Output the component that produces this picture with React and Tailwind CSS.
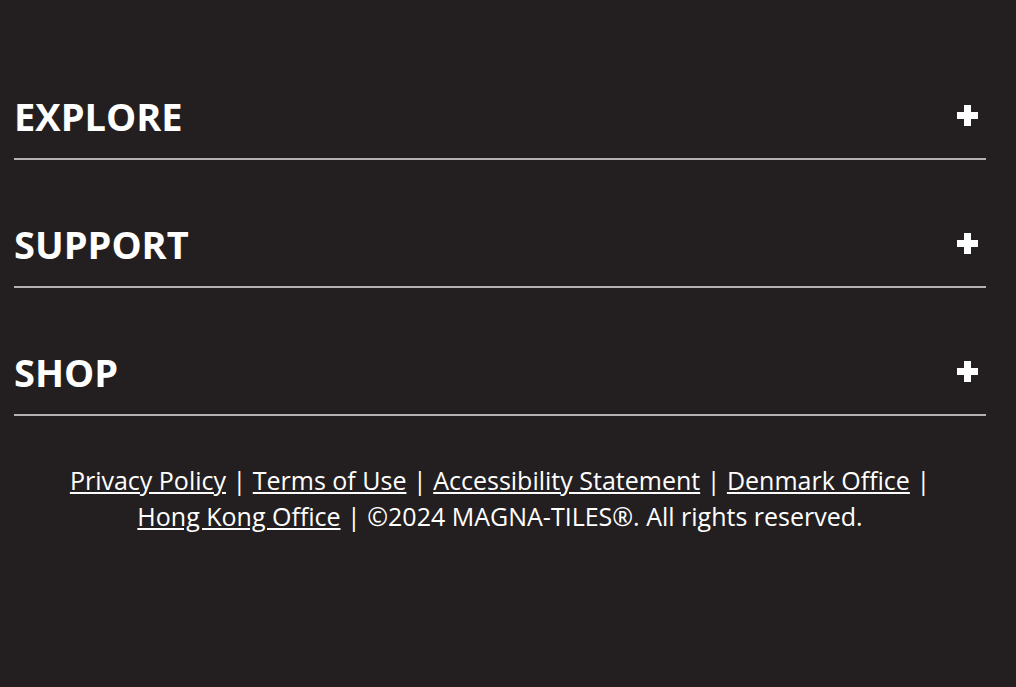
import React from 'react';

const sections = ['EXPLORE', 'SUPPORT', 'SHOP'];

function PlusIcon() {
    return (
        <svg width="21" height="21" viewBox="0 0 21 21" fill="#fff">
            <rect x="7" y="0" width="7" height="21" />
            <rect x="0" y="7" width="21" height="7" />
        </svg>
    );
}

function App() {
    return (
        <div
            className="min-h-[687px] bg-[#231f20] text-white pt-[32px] px-[14px]"
            style={{ fontFamily: '"Open Sans", "Liberation Sans", sans-serif' }}
        >
            <div className="w-[972px]">
                {sections.map((s) => (
                    <div
                        key={s}
                        className="h-[128px] flex items-end justify-between border-b-2 border-[#b3b1b1] pb-[18px]"
                    >
                        <h3 className="text-[38px] leading-[48px] font-bold">{s}</h3>
                        <button className="mr-[8px] mb-[14px]">
                            <PlusIcon />
                        </button>
                    </div>
                ))}
            </div>
            <p className="mt-[46px] text-center text-[25px] leading-[36px] w-[972px]">
                <a href="#" className="underline">Privacy Policy</a> |{' '}
                <a href="#" className="underline">Terms of Use</a> |{' '}
                <a href="#" className="underline">Accessibility Statement</a> |{' '}
                <a href="#" className="underline">Denmark Office</a> |
                <br />
                <a href="#" className="underline">Hong Kong Office</a> | ©2024 MAGNA-TILES®. All rights reserved.
            </p>
        </div>
    );
}

export default App;
